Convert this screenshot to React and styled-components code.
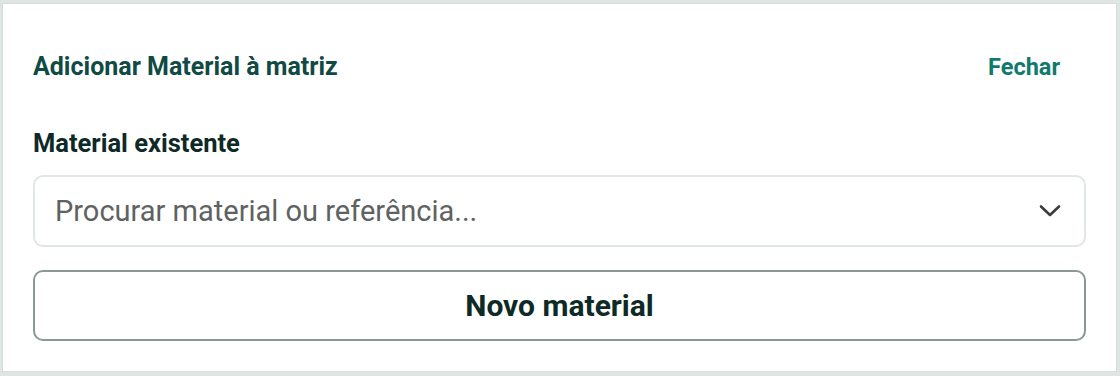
import styled, { createGlobalStyle } from "styled-components";

const GlobalStyle = createGlobalStyle`
  html, body {
    margin: 0;
    padding: 0;
    background: #dfe5e3;
    font-family: Roboto, "Liberation Sans", sans-serif;
  }
  * { box-sizing: border-box; }
`;

const Page = styled.div`
  width: 1120px;
  height: 376px;
  padding: 3px 3px 4px 2px;
`;

const Card = styled.section`
  height: 100%;
  background: #fff;
  border: 1px solid #d6dddb;
  padding: 49px 30px 30px 30px;
  display: flex;
  flex-direction: column;
`;

const Header = styled.div`
  display: flex;
  align-items: center;
  justify-content: space-between;
  height: 28px;
`;

const Title = styled.h2`
  margin: 0;
  font-size: 25px;
  line-height: 28px;
  font-weight: 700;
  color: #0f4a44;
`;

const CloseButton = styled.button`
  background: transparent;
  border: 0;
  padding: 0 26px 0 0;
  font-family: inherit;
  font-size: 23.5px;
  line-height: 28px;
  font-weight: 700;
  color: #127a6d;
  cursor: pointer;
`;

const Label = styled.label`
  margin-top: 50px;
  height: 24px;
  line-height: 24px;
  font-size: 25.5px;
  font-weight: 700;
  color: #0e2a26;
`;

const Select = styled.div`
  margin-top: 20px;
  height: 72px;
  border: 2px solid #e1e7e5;
  border-radius: 10px;
  display: flex;
  align-items: center;
  justify-content: space-between;
  padding: 0 23px 0 20px;
`;

const Placeholder = styled.span`
  font-size: 29px;
  color: #5e6261;
`;

const PrimaryButton = styled.button`
  margin-top: 23px;
  height: 71px;
  width: 100%;
  background: #fff;
  border: 2px solid #8b9895;
  border-radius: 10px;
  font-family: inherit;
  font-size: 30px;
  font-weight: 700;
  color: #0e2a26;
  cursor: pointer;
`;

function Chevron() {
  return (
    <svg width="22" height="14" viewBox="0 0 22 14" fill="none">
      <path d="M2 2.5 L11 11 L20 2.5" stroke="#3a3d3c" strokeWidth="2.6" strokeLinecap="round" strokeLinejoin="round" />
    </svg>
  );
}

export default function App() {
  return (
    <>
      <GlobalStyle />
      <Page>
        <Card>
          <Header>
            <Title>Adicionar Material à matriz</Title>
            <CloseButton>Fechar</CloseButton>
          </Header>
          <Label>Material existente</Label>
          <Select>
            <Placeholder>Procurar material ou referência...</Placeholder>
            <Chevron />
          </Select>
          <PrimaryButton>Novo material</PrimaryButton>
        </Card>
      </Page>
    </>
  );
}
